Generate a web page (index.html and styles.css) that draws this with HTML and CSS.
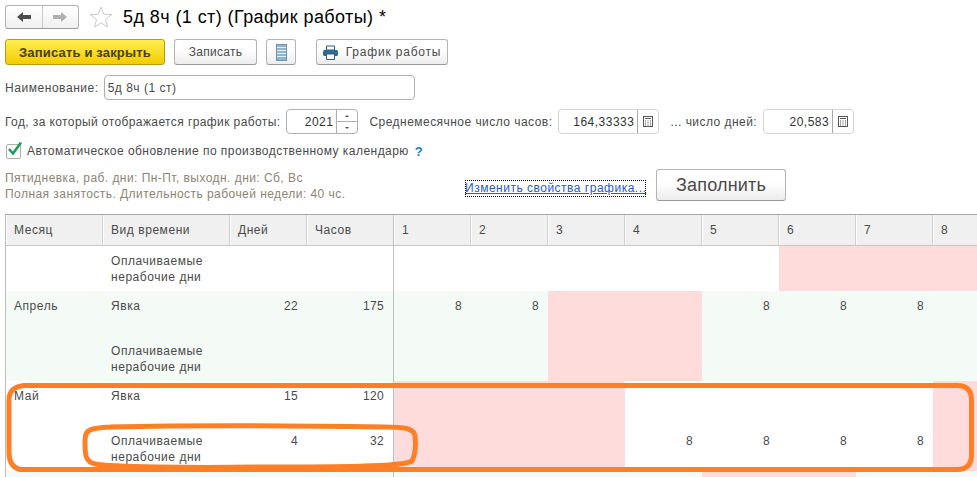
FILE: index.html
```html
<!DOCTYPE html>
<html lang="ru">
<head>
<meta charset="utf-8">
<title>5д 8ч (1 ст) (График работы)</title>
<link rel="stylesheet" href="styles.css">
</head>
<body>
<div class="page">
  <div class="title-row">
    <div class="nav">
      <span class="nav-btn"><svg width="16" height="12" viewBox="0 0 16 12"><path d="M1 6 L7 1 V4 H15 V8 H7 V11 Z" fill="#4d4d4d"/></svg></span>
      <span class="nav-btn nav-btn-next"><svg width="16" height="12" viewBox="0 0 16 12"><path d="M15 6 L9 1 V4 H1 V8 H9 V11 Z" fill="#b0b0b0"/></svg></span>
    </div>
    <svg class="star" width="24" height="24" viewBox="0 0 24 24"><path d="M12 2 L14.8 9.2 L22.6 9.6 L16.5 14.5 L18.6 22 L12 17.8 L5.4 22 L7.5 14.5 L1.4 9.6 L9.2 9.2 Z" fill="#fff" stroke="#c9c9c9"/></svg>
    <h1 class="title">5д 8ч (1 ст) (График работы) *</h1>
  </div>

  <div class="toolbar">
    <button class="btn btn-primary">Записать и закрыть</button>
    <button class="btn btn-save">Записать</button>
    <button class="btn btn-icon"><svg width="11" height="17" viewBox="0 0 11 17"><rect x="0.5" y="0.5" width="10" height="16" fill="#8fb4d2" stroke="#6d93b3"/><path d="M1 3.5H10M1 6.5H10M1 9.5H10M1 12.5H10" stroke="#e8f0f6"/></svg></button>
    <button class="btn btn-print"><svg width="15" height="15" viewBox="0 0 15 15"><path d="M3.5 1H11.5V5H3.5Z" fill="#fff" stroke="#2f5f85"/><rect x="0" y="5" width="15" height="6" rx="1.5" fill="#2f6a96"/><path d="M3.5 9H11.5V14.5H3.5Z" fill="#fff" stroke="#2f5f85"/></svg>График работы</button>
  </div>

  <div class="name-row">
    <label class="label label-name">Наименование:</label>
    <div class="field field-name">5д 8ч (1 ст)</div>
  </div>

  <div class="year-row">
    <label class="label label-year">Год, за который отображается график работы:</label>
    <div class="field field-year">
      <span class="value">2021</span>
      <span class="spin"><i class="spin-up"></i><i class="spin-down"></i></span>
    </div>
    <label class="label label-hours">Среднемесячное число часов:</label>
    <div class="field field-num field-hours">
      <span class="value">164,33333</span>
      <span class="calc"><svg width="12" height="13" viewBox="0 0 12 13"><rect x="1.5" y="1.5" width="9" height="10" fill="none" stroke="#555"/><path d="M3 3.5H9" stroke="#555"/><path d="M3 6H4M5.5 6H6.5M8 6H9M3 8H4M5.5 8H6.5M8 8H9M3 10H4M5.5 10H6.5M8 10H9" stroke="#555"/></svg></span>
    </div>
    <label class="label label-days">... число дней:</label>
    <div class="field field-num field-days">
      <span class="value">20,583</span>
      <span class="calc"><svg width="12" height="13" viewBox="0 0 12 13"><rect x="1.5" y="1.5" width="9" height="10" fill="none" stroke="#555"/><path d="M3 3.5H9" stroke="#555"/><path d="M3 6H4M5.5 6H6.5M8 6H9M3 8H4M5.5 8H6.5M8 8H9M3 10H4M5.5 10H6.5M8 10H9" stroke="#555"/></svg></span>
    </div>
  </div>

  <div class="check-row">
    <span class="checkbox"><svg width="17" height="17" viewBox="0 0 17 17"><path d="M3 8 L7 12.5 L15 1.5" fill="none" stroke="#1f9d57" stroke-width="2.6"/></svg></span>
    <span class="label">Автоматическое обновление по производственному календарю</span>
    <span class="help">?</span>
  </div>

  <div class="info-row">
    <div class="info">Пятидневка, раб. дни: Пн-Пт, выходн. дни: Сб, Вс<br>Полная занятость. Длительность рабочей недели: 40 чс.</div>
    <a class="link" href="#">Изменить свойства графика...</a>
    <button class="btn btn-fill">Заполнить</button>
  </div>

  <div class="grid-wrap">
    <table class="grid">
      <colgroup>
        <col class="c-month"><col class="c-kind"><col class="c-days"><col class="c-hours">
        <col class="c-d"><col class="c-d"><col class="c-d"><col class="c-d"><col class="c-d"><col class="c-d"><col class="c-d"><col class="c-d">
      </colgroup>
      <thead>
        <tr><th>Месяц</th><th>Вид времени</th><th>Дней</th><th class="last-fixed">Часов</th><th>1</th><th>2</th><th>3</th><th>4</th><th>5</th><th>6</th><th>7</th><th>8</th></tr>
      </thead>
      <tbody>
        <tr>
          <td></td><td class="wrap">Оплачиваемые нерабочие дни</td><td></td><td class="last-fixed"></td>
          <td></td><td></td><td></td><td></td><td></td><td class="off"></td><td class="off"></td><td class="off"></td>
        </tr>
        <tr class="alt">
          <td>Апрель</td><td>Явка</td><td class="num">22</td><td class="num last-fixed">175</td>
          <td class="num">8</td><td class="num">8</td><td class="off"></td><td class="off"></td><td class="num">8</td><td class="num">8</td><td class="num">8</td><td></td>
        </tr>
        <tr class="alt">
          <td></td><td class="wrap">Оплачиваемые нерабочие дни</td><td></td><td class="last-fixed"></td>
          <td></td><td></td><td class="off"></td><td class="off"></td><td></td><td></td><td></td><td></td>
        </tr>
        <tr>
          <td>Май</td><td>Явка</td><td class="num">15</td><td class="num last-fixed">120</td>
          <td class="off"></td><td class="off"></td><td class="off"></td><td></td><td></td><td></td><td></td><td class="off"></td>
        </tr>
        <tr>
          <td></td><td class="wrap">Оплачиваемые нерабочие дни</td><td class="num">4</td><td class="num last-fixed">32</td>
          <td class="off"></td><td class="off"></td><td class="off"></td><td class="num">8</td><td class="num">8</td><td class="num">8</td><td class="num">8</td><td class="off"></td>
        </tr>
        <tr class="alt">
          <td></td><td></td><td></td><td class="last-fixed"></td>
          <td></td><td></td><td></td><td></td><td class="off"></td><td class="off"></td><td></td><td></td>
        </tr>
      </tbody>
    </table>
  </div>
</div>

<svg class="marks" width="977" height="477" viewBox="0 0 977 477">
  <path d="M24 385.5 H957 Q971.5 385.5 971.5 400 V455 Q971.5 469.5 957 469.5 H20 Q9 467 9 452 V400 Q9 387 24 385.5 Z" fill="none" stroke="#ff7f27" stroke-width="5"/>
  <path d="M110 427 C200 425 320 426 385 427 C403 427 414 428 415 436 C416 445 415 455 412 461 C405 467 330 467 260 467 C190 468 110 467 95 464 C86 462 85 455 85 445 C85 435 85 431 93 429 C98 428 104 427 110 427 Z" fill="none" stroke="#ff7f27" stroke-width="5"/>
</svg>
</body>
</html>
```
FILE: styles.css
```css
* { box-sizing: border-box; }
html, body { margin: 0; padding: 0; }
body {
  width: 977px;
  height: 477px;
  overflow: hidden;
  position: relative;
  background: #fff;
  font-family: "Liberation Sans", Arial, sans-serif;
  font-size: 12px;
  color: #4a4a4a;
}
.page { padding: 5px 0 0 5px; }

.title-row { display: flex; align-items: center; height: 24px; }
.nav {
  display: flex;
  width: 74px;
  height: 24px;
  border: 1px solid #b4b4b4;
  border-bottom-color: #9a9a9a;
  border-radius: 3px;
  background: linear-gradient(#fff, #f0f0f0);
}
.nav-btn { flex: 1; display: flex; align-items: center; justify-content: center; }
.nav-btn-next { border-left: 1px solid #c8c8c8; }
.star { margin-left: 10px; }
.title { margin: 0 0 0 10px; font-size: 18px; font-weight: normal; color: #000; letter-spacing: 0.42px; }

.toolbar { display: flex; margin-top: 10px; height: 26px; }
.btn {
  font: inherit;
  font-size: 12px;
  letter-spacing: 0.3px;
  color: #4a4a4a;
  height: 26px;
  padding: 0;
  border: 1px solid #b4b4b4;
  border-bottom-color: #9a9a9a;
  border-radius: 3px;
  background: linear-gradient(#fff 40%, #ececec);
  display: flex;
  align-items: center;
  justify-content: center;
}
.btn-primary {
  width: 160px;
  font-weight: bold;
  font-size: 13px;
  letter-spacing: 0.17px;
  color: #4a4000;
  border-color: #b89c10;
  background: linear-gradient(#ffee50, #f3cc00);
}
.btn-save { width: 83px; margin-left: 9px; }
.btn-icon { width: 30px; margin-left: 9px; }
.btn-print { width: 132px; margin-left: 20px; gap: 8px; letter-spacing: 0.8px; }

.label { letter-spacing: 0.46px; white-space: nowrap; }
.label-name { letter-spacing: 0.55px; }
.label-year { letter-spacing: 0.4px; }
.field {
  height: 25px;
  border: 1px solid #b0b0b0;
  border-radius: 4px;
  background: #fff;
  display: flex;
  align-items: center;
  letter-spacing: 0.5px;
}
.name-row { display: flex; align-items: center; margin-top: 10px; }
.field-name { width: 311px; margin-left: 5px; padding-left: 3px; }

.year-row { display: flex; align-items: center; margin-top: 9px; }
.value { flex: 1; text-align: right; padding-right: 3px; color: #333; }
.field-year { width: 72px; margin-left: 6px; }
.spin { width: 21px; height: 100%; border-left: 1px solid #b0b0b0; display: flex; flex-direction: column; }
.spin-up, .spin-down { flex: 1; display: flex; align-items: center; justify-content: center; }
.spin-up { border-bottom: 1px solid #b0b0b0; }
.spin-up::before { content: ""; border: 2px solid transparent; border-top: 0; border-bottom-color: #555; }
.spin-down::before { content: ""; border: 2px solid transparent; border-bottom: 0; border-top-color: #555; }
.label-hours { margin-left: 11px; }
.field-num { border-color: #d4d4d4; }
.field-hours { width: 101px; margin-left: 6px; }
.field-days { width: 91px; margin-left: 6px; }
.label-days { margin-left: 11px; }
.calc { width: 21px; height: 100%; border-left: 1px solid #a8a8a8; display: flex; align-items: center; justify-content: center; }

.check-row { display: flex; align-items: center; margin-top: 9px; height: 16px; }
.checkbox {
  position: relative;
  width: 15px;
  height: 15px;
  margin-left: 1px;
  border: 1px solid #b0b0b0;
  border-radius: 2px;
  background: #fff;
}
.checkbox svg { position: absolute; left: -1px; top: -4px; }
.check-row .label { margin-left: 6px; }
.help { margin-left: 6px; color: #1a7cc4; font-weight: bold; font-size: 13px; }

.info-row { display: flex; margin-top: 10px; height: 32px; }
.info { width: 460px; margin-top: 1px; line-height: 16px; color: #8c8474; letter-spacing: 0.45px; }
.link {
  align-self: flex-end;
  margin-bottom: 4px;
  width: 181px;
  height: 17px;
  line-height: 16px;
  color: #2a5ad0;
  letter-spacing: 0.5px;
  white-space: nowrap;
  outline: 1px dotted #000;
  outline-offset: -1px;
}
.btn-fill { width: 130px; height: 32px; margin-left: 10px; font-size: 18px; letter-spacing: 0.2px; }

.grid-wrap {
  margin-top: 13px;
  width: 972px;
  height: 263px;
  overflow: hidden;
  border-top: 1px solid #a8a8a8;
  border-left: 1px solid #bcbcbc;
}
.grid { table-layout: fixed; border-collapse: separate; border-spacing: 0; width: 1004px; }
.c-month { width: 97px; }
.c-kind { width: 127px; }
.c-days { width: 77px; }
.c-hours { width: 87px; }
.c-d { width: 77px; }
.grid th {
  height: 31px;
  padding: 0 8px;
  text-align: left;
  font-weight: normal;
  letter-spacing: 0.55px;
  background: #f0f0f0;
  border-right: 1px solid #d0d0d0;
  border-bottom: 1px solid #c6c6c6;
  box-shadow: inset 1px 0 0 #fff;
  white-space: nowrap;
}
.grid td {
  height: 45px;
  padding: 7px 8px 0;
  vertical-align: top;
  letter-spacing: 0.55px;
  line-height: 16px;
  white-space: nowrap;
}
.grid td.wrap { white-space: normal; }
.grid td.num { text-align: right; padding-right: 9px; letter-spacing: 0.3px; }
.grid .alt td { background: #f4faf6; }
.grid td.off, .grid .alt td.off { background: #ffdcdc; }
.grid .last-fixed { border-right: 1px solid #c0c0c0; }

.marks { position: absolute; left: 0; top: 0; pointer-events: none; }
```
